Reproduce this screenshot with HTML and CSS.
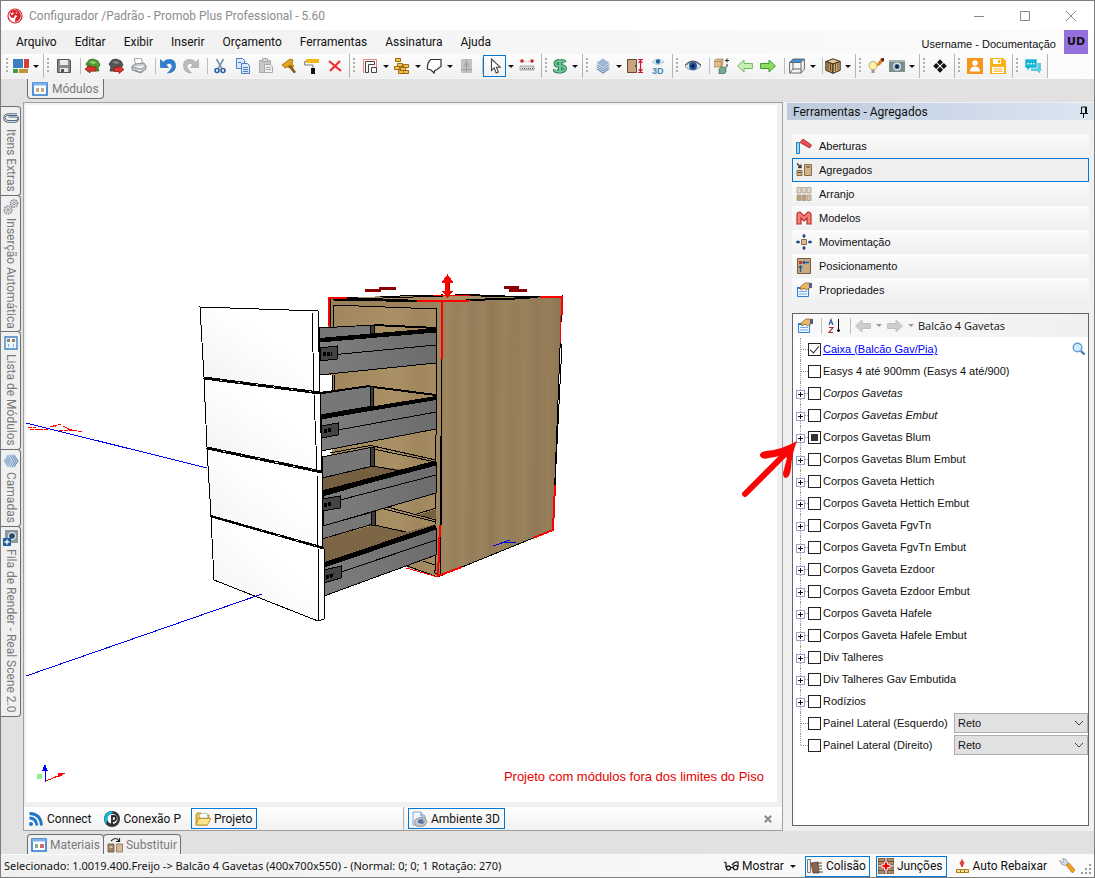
FILE: index.html
```html
<!DOCTYPE html>
<html lang="pt-BR">
<head>
<meta charset="utf-8">
<title>Configurador /Padrão - Promob Plus Professional - 5.60</title>
<link rel="stylesheet" href="styles.css">
</head>
<body>
<div class="window">
<header class="titlebar">
  <svg class="logo" viewBox="0 0 16 16"><circle cx="8" cy="8" r="7" fill="#fff" stroke="#d8202b" stroke-width="1.200"/><path d="M4 3Q8 .8 12 3.500q2.500 3 1.500 6-2 4-5.500 4.500l.5-4 2-2-2.500-1L7 10 4 9.500 2.500 7z" fill="#d8202b"/><path d="M4 5.200l2.500-1v2l-2 1zM8.600 4.200l2 .4-1.500 1.400z" fill="#fff"/></svg>
  <h1>Configurador /Padrão - Promob Plus Professional - 5.60</h1>
  <div class="winctl">
    <button aria-label="Minimizar"><svg viewBox="0 0 12 12"><path d="M1 6.500h10"/></svg></button>
    <button aria-label="Maximizar"><svg viewBox="0 0 12 12"><path d="M1.500 1.500h9v9h-9z"/></svg></button>
    <button aria-label="Fechar"><svg viewBox="0 0 12 12"><path d="M1 1l10 10M11 1L1 11"/></svg></button>
  </div>
</header>
<nav class="menubar">
  <button>Arquivo</button><button>Editar</button><button>Exibir</button><button>Inserir</button><button>Orçamento</button><button>Ferramentas</button><button>Assinatura</button><button>Ajuda</button>
  <span class="user">Username - Documentação</span><span class="avatar">UD</span>
</nav>
<div class="toolbar">
  <div class="grp"><i class="grip"></i>
    <button class="tb nar" aria-label="Painéis"><svg viewBox="0 0 16 16"><path fill="#3f7fbf" d="M0 1h10v9H0z"/><path fill="#cf4238" d="M11 1h5v9h-5z"/><path fill="#3e9c3e" d="M0 11h5v4H0z"/><path fill="#c39237" d="M6 11h9v4H6z"/></svg></button><button class="car" aria-label="Opções"></button>
  </div>
  <div class="grp"><i class="grip"></i>
    <button class="tb" aria-label="Salvar"><svg viewBox="0 0 16 16"><path fill="#888a88" stroke="#555" d="M1.500 1.500h12l1 1v12h-13z"/><path fill="#e8ece6" d="M4 2h8v5H4zM4 10h8v4H4z"/><path fill="#555" d="M5 11h3v3H5z"/></svg></button><i class="sep"></i>
    <button class="tb" aria-label="Importar"><svg viewBox="0 0 16 16"><path d="M1 6l3-4 4-1 5 2 2 4-2 3 1 3H2l1-4z" fill="#4f9a35" stroke="#2c6a1c" stroke-width=".8"/><path d="M4 4l4-1 4 2-4 1z" fill="#9bd070"/><path d="M0 11l5-4v2h6v4H5v2z" fill="#e0342c" stroke="#8d1510" stroke-width=".7"/></svg></button>
    <button class="tb" aria-label="Exportar"><svg viewBox="0 0 16 16"><path d="M1 6l3-4 4-1 5 2 2 4-2 3 1 3H2l1-4z" fill="#555" stroke="#333" stroke-width=".8"/><path d="M4 4l4-1 4 2-4 1z" fill="#888"/><path d="M16 11.500l-5-4v2H6v4h5v2z" fill="#e0342c" stroke="#8d1510" stroke-width=".7"/></svg></button>
    <button class="tb" aria-label="Imprimir"><svg viewBox="0 0 16 16"><path d="M3 1l7-1 2 6-7 1z" fill="#fff" stroke="#888" stroke-width=".8"/><path d="M1 8l3-2 9-1 2 3v3l-5 4-9-3z" fill="#c9ced6" stroke="#777" stroke-width=".8"/><path d="M1 9l9 2 5-3M4 12l5 2 3-2" stroke="#777" fill="#fff" stroke-width=".8"/></svg></button><i class="sep"></i>
    <button class="tb" aria-label="Desfazer"><svg viewBox="0 0 16 16"><path d="M.5 1.500v8h8L5.800 6.800Q9 4 11.300 6.200T10 12.500L7.500 15q8-.5 8-7T10 1.500 3.500 4.500z" fill="#2f7fd4" stroke="#1a5ca8" stroke-width=".6"/></svg></button>
    <button class="tb" aria-label="Refazer"><svg viewBox="0 0 16 16"><path d="M15.500 1.500v8h-8l2.700-2.700Q7 4 4.700 6.200T6 12.500L8.500 15Q.5 14.500.5 8T6 1.500t6.500 3z" fill="#bcbcbc" stroke="#999" stroke-width=".6"/></svg></button><i class="sep"></i>
    <button class="tb" aria-label="Recortar"><svg viewBox="0 0 16 16" fill="none"><path d="M4.500 1l5 9M11.500 1l-5 9" stroke="#7a93b0" stroke-width="1.600"/><circle cx="5" cy="12.500" r="2" stroke="#2a5ea8" stroke-width="1.600"/><circle cx="11" cy="12.500" r="2" stroke="#2a5ea8" stroke-width="1.600"/></svg></button>
    <button class="tb" aria-label="Copiar"><svg viewBox="0 0 16 16" fill="#dbe9fa" stroke="#4a7fc8"><path d="M1.500.5h6l2 2v8h-8z"/><path d="M6.500 5.500h6l2 2v8h-8z"/><path d="M8 9.500h5M8 11.500h5M8 13.500h5M3 4.500h3"/></svg></button>
    <button class="tb" aria-label="Colar"><svg viewBox="0 0 16 16" stroke="#a8a8a8"><path fill="#c8c8c8" d="M1.500 2.500h11v12h-11z"/><path fill="#ddd" d="M4.500.5h5v3h-5z"/><path fill="#eee" d="M6.500 6.500h6l2 2v6h-8z"/><path d="M8 9.500h5M8 11.500h5"/></svg></button>
    <button class="tb" aria-label="Martelo"><svg viewBox="0 0 16 16"><path d="M1 7l8-6 3 1-1 4 2 2-3 2-4-1-2 1z" fill="#e0a51c" stroke="#95690a" stroke-width=".8"/><path d="M7 8l3-1 5 7-2 1.500z" fill="#8a5a14"/></svg></button>
    <button class="tb" aria-label="Rolo"><svg viewBox="0 0 16 16"><path d="M2 1h13v4H2z" fill="#f3b61c"/><path d="M2 3.500H.7V7H9v4" stroke="#777" fill="none"/><path d="M7 10h4v6H7z" fill="#111"/></svg></button>
    <button class="tb" aria-label="Excluir"><svg viewBox="0 0 16 16"><path d="M2 3l12 10M13 3L3 13" stroke="#ee3030" stroke-width="2.200"/></svg></button>
  </div>
  <div class="grp"><i class="grip"></i>
    <button class="tb" aria-label="Paredes"><svg viewBox="0 0 16 16" fill="none"><path d="M1.500 15V1.500h13V9" stroke="#e88080"/><path d="M3.500 14.500V3.500h9v3H6.500v8zM9.500 14.500v-5h5v5z" stroke="#444"/></svg></button><button class="car" aria-label="Opções"></button>
    <button class="tb" aria-label="Tijolos"><svg viewBox="0 0 16 16" fill="#f7c34a" stroke="#9a6a10"><path d="M1.500.5h5v3h-5zM3.500 5.500h5v3h-5zM9.500 6.500h5v3h-5zM.5 8.500h5v3h-5zM6.500 9.500h5v3h-5zM4.500 12.500h5v3h-5zM9.500 12.500h5v3h-5z"/></svg></button><button class="car" aria-label="Opções"></button>
    <button class="tb" aria-label="Forma"><svg viewBox="0 0 16 16"><path d="M5 1.500h10v7l-4 3q-3 .5-3 3.500L5 12 1.500 11Q1 4 5 1.500z" fill="#fff" stroke="#333" stroke-width="1.200"/></svg></button><button class="car" aria-label="Opções"></button>
    <button class="tb" aria-label="Armário"><svg viewBox="0 0 16 16"><path fill="#c2c2c2" d="M3 1h11v14H3z"/><path stroke="#a0a0a0" d="M8.500 1v14M7 5v4M10 5v4M3 11.500h11"/></svg></button><i class="sep"></i>
    <button class="tb on" aria-label="Selecionar"><svg viewBox="0 0 16 16"><path d="M4.500 1v11.500l2.700-2.600 2 5 2.200-1-2-4.700h3.800z" fill="#fff" stroke="#444" stroke-width="1.100"/></svg></button><button class="car" aria-label="Opções"></button>
    <button class="tb" aria-label="Medir"><svg viewBox="0 0 16 16"><circle cx="3" cy="3" r="1.800" fill="#c22"/><circle cx="13" cy="3" r="1.800" fill="#c22"/><path d="M5 3.500h6" stroke="#aaa" stroke-dasharray="1"/><path d="M1 8h14v4H1z" fill="#d9dade" stroke="#888" stroke-width=".7"/><path d="M3 10.500h11" stroke="#555" stroke-dasharray="1 1"/></svg></button>
  </div>
  <div class="grp"><i class="grip"></i>
    <button class="tb nar" aria-label="Orçamento"><svg viewBox="0 0 16 16" fill="none"><path d="M13 4.500Q12 3 8 3 3.500 3 3.500 5.500T8 8t5 2.500T8 13.300 3 11.500M8 1v14.500" stroke="#2c7d55" stroke-width="4"/><path d="M13 4.500Q12 3 8 3 3.500 3 3.500 5.500T8 8t5 2.500T8 13.300 3 11.500M8 1v14" stroke="#6cc795" stroke-width="2"/></svg></button><button class="car" aria-label="Opções"></button>
  </div>
  <div class="grp"><i class="grip"></i>
    <button class="tb" aria-label="Camadas"><svg viewBox="0 0 16 16" stroke="#e6eef7" stroke-width=".8"><path d="M1 11l7-4 7 4-7 5z" fill="#5f7fa6"/><path d="M1 9l7-4 7 4-7 5z" fill="#6f8fb6"/><path d="M1 7l7-4 7 4-7 5z" fill="#7f9dc2"/><path d="M1 4.800L8 .3l7 4.500-7 5z" fill="#9db8d6"/></svg></button><button class="car" aria-label="Opções"></button>
    <button class="tb" aria-label="Cotas"><svg viewBox="0 0 16 16"><path d="M.5 1.500h9v13h-9z" fill="#c9a37c" stroke="#6b4b2e"/><path d="M8.500 7v2" stroke="#553"/><path d="M11 1.500h5M11 14.500h5M13.500 2v12M11.500 5l2-2.500 2 2.500M11.500 11l2 2.500 2-2.500" stroke="#cf1040" stroke-width="1.200" fill="none"/></svg></button>
    <button class="tb" aria-label="Visão 3D"><svg viewBox="0 0 16 16"><path d="M2 4q6-6 12 0-6 5-12 0z" fill="#dceaf6" stroke="#9fc0dc" stroke-width=".7"/><circle cx="8" cy="3.500" r="2.200" fill="#27608f"/><text class="i3d" x="2" y="15.500">3D</text></svg></button>
  </div>
  <div class="grp"><i class="grip"></i>
    <button class="tb" aria-label="Visualizar"><svg viewBox="0 0 16 16"><path d="M0 8.500Q8 0 16 8q-8 8-16 .5z" fill="#e8eef6" stroke="#6a7d96" stroke-width=".8"/><circle cx="8" cy="8" r="4" fill="#2456a0"/><circle cx="8" cy="8" r="1.800" fill="#0b1a38"/><path d="M0 7Q8-1 16 7" stroke="#333" fill="none"/></svg></button><i class="sep"></i>
    <button class="tb" aria-label="Substituir"><svg viewBox="0 0 16 16"><path d="M0 3.500L2 1h7v6L7 9H0z" fill="#e2bd8a" stroke="#9a7546" stroke-width=".6"/><path d="M0 3.500h7V9M7 3.500L9 1" fill="none" stroke="#9a7546" stroke-width=".6"/><path d="M5 11l2-2h5v5l-2 2H5z" fill="#71a98c" stroke="#33664c" stroke-width=".6"/><path d="M11 2.500h4M13 .5v4M13 6v3" stroke="#222" fill="none"/></svg></button>
    <button class="tb" aria-label="Anterior"><svg viewBox="0 0 16 16"><path d="M.6 8L7 2v3.500h8.400v5H7V14z" fill="#c9efb4" stroke="#6fb960"/></svg></button>
    <button class="tb" aria-label="Próximo"><svg viewBox="0 0 16 16"><path d="M15.400 8L9 2v3.500H.6v5H9V14z" fill="#8edb62" stroke="#3c9a2c"/></svg></button><i class="sep"></i>
    <button class="tb" aria-label="Perspectiva"><svg viewBox="0 0 16 16"><path d="M.6 4.500L4 1h11.400l-3.400 3.500z" fill="#3f8fe0"/><path d="M.6 4.500V15H12l3.400-4V1H4L.6 4.500H12V15M12 4.500L15.400 1M4 4.500V11h8M4 11L.6 15" stroke="#666" fill="none"/></svg></button><button class="car" aria-label="Opções"></button><i class="sep"></i>
    <button class="tb nar" aria-label="Material"><svg viewBox="0 0 16 16" stroke="#3b2a18"><path d="M.8 3.500L8 .8l7.200 2.700L8 6z" fill="#e6c79a"/><path d="M.8 3.500L8 6v9.300l-7.200-3z" fill="#bb9462"/><path d="M15.200 3.500L8 6v9.300l7.200-3z" fill="#d4ad7a"/><path d="M3 5v7M5.500 6v7M10.500 6v7M13 5v7" stroke-width=".7"/></svg></button><button class="car" aria-label="Opções"></button>
  </div>
  <div class="grp"><i class="grip"></i>
    <button class="tb" aria-label="Iluminação"><svg viewBox="0 0 16 16"><path d="M1 7.500q0-4 4-4t4 4q0 2-2 4H3q-2-2-2-4z" fill="#fdf2a6" stroke="#b3a05a" stroke-width=".8"/><path d="M3.500 12h3v3h-3z" fill="#999"/><path d="M9 6l4-5.500L16 2l-4 5-3 1z" fill="#e07e1a"/><path d="M12.500.5L16 0v3l-1.500 1z" fill="#4a2410"/></svg></button>
    <button class="tb nar" aria-label="Câmera"><svg viewBox="0 0 16 16"><path d="M0 2h16v12H0z" fill="#7d8c8c"/><path d="M0 2h16v2H0z" fill="#a9b5b5"/><circle cx="8" cy="8.500" r="4" fill="#dfe6ea"/><circle cx="8" cy="8.500" r="2.600" fill="#2a5b86"/><circle cx="8" cy="8.500" r="1.200" fill="#0a1a2a"/></svg></button><button class="car" aria-label="Opções"></button>
  </div>
  <div class="grp"><i class="grip"></i>
    <button class="tb" aria-label="Módulos"><svg viewBox="0 0 16 16"><path d="M8 1.200l3 3-3 3-3-3zM4.200 5l3 3-3 3-3-3zM11.800 5l3 3-3 3-3-3zM8 8.800l3 3-3 3-3-3z" fill="#111"/></svg></button>
  </div>
  <div class="grp"><i class="grip"></i>
    <button class="tb" aria-label="Perfil"><svg viewBox="0 0 16 16"><path fill="#f7941d" d="M0 0h16v16H0z"/><circle cx="8" cy="5" r="2.800" fill="#fff"/><path d="M3 13.500q0-5 5-5t5 5z" fill="#fff"/></svg></button>
    <button class="tb" aria-label="Salvar na nuvem"><svg viewBox="0 0 16 16"><path fill="#fbb11a" d="M0 0h13l3 3v13H0z"/><path d="M3 1h8v5H3zM2 9h12v6H2z" fill="#fff"/><path d="M8 2h2v3H8zM3.500 10.500h9v1h-9zM3.500 12.700h9v1h-9z" fill="#fbb11a"/></svg></button>
  </div>
  <div class="grp"><i class="grip"></i>
    <button class="tb" aria-label="Mensagens"><svg viewBox="0 0 16 16"><path d="M6 5h10v8h-1v2.500L12 13H6z" fill="#5ccbe0"/><path d="M0 1h12v9H5l-3 3v-3H0z" fill="#12b5d6" stroke="#fff" stroke-width=".6"/><path d="M2.500 5h1.600v1.600H2.500zM5.300 5h1.600v1.600H5.300zM8.100 5h1.600v1.600H8.100z" fill="#fff"/></svg></button>
  </div>
</div>

<div class="tabrow top"><button class="tab"><svg viewBox="0 0 16 16"><path d="M1 2h14v12H1z" fill="#fff" stroke="#2a78cf" stroke-width="1.600"/><path d="M1 2h14v2.500H1z" fill="#7db2e8"/><path d="M4 7h3v4H4zM9 7h3v4H9z" fill="#c4ad86"/></svg>Módulos</button></div>

<div class="work">
  <aside class="side">
    <button><svg viewBox="0 0 16 16" fill="none"><path d="M14 5.500H5Q2 5.500 2 8t3 2.500h8q2 0 2-1.700T13 7H5.500M14 5.500Q15.500 6 15.500 9q-.5 3.300-3 3.300H5Q.7 12 .7 8T5 3.800h9" stroke="#3d5875" stroke-width=".9"/></svg><span>Itens Extras</span></button>
    <button><svg viewBox="0 0 16 16" fill="none" stroke="#8b8b96"><circle cx="11" cy="4.500" r="3.500" stroke-width="1.800" stroke-dasharray="1.400 .8"/><circle cx="11" cy="4.500" r="1.300"/><circle cx="5" cy="11" r="3.700" stroke-width="1.800" stroke-dasharray="1.400 .8"/><circle cx="5" cy="11" r="1.300"/></svg><span>Inserção Automática</span></button>
    <button><svg viewBox="0 0 16 16"><path d="M2 2h12v12H2z" fill="#eef5fd" stroke="#3d7fc4" stroke-width="1.300"/><path d="M4 4h3v3H4zM9 4h3v3H9z" fill="#8a8468"/><path d="M5.500 9v3M10.500 9v3" stroke="#7daee0"/></svg><span>Lista de Módulos</span></button>
    <button><svg viewBox="0 0 16 16" stroke="#e6eef7" stroke-width=".8"><path d="M11 1l5 7-5 7-5-7z" fill="#5f7fa6"/><path d="M9 1l5 7-5 7-5-7z" fill="#6f8fb6"/><path d="M7 1l5 7-5 7-5-7z" fill="#7f9dc2"/><path d="M5 1l4.500 7L5 15 .3 8z" fill="#9db8d6"/></svg><span>Camadas</span></button>
    <button><svg viewBox="0 0 16 16"><path d="M2 0h13v13H2z" fill="#8b9b9b"/><circle cx="9" cy="6" r="4" fill="#dfe6ea"/><circle cx="9" cy="6" r="2.800" fill="#24496c"/><path d="M0 8h8v8H0z" fill="#1f5f9c"/><path d="M1.500 12h5M4 9.500v5" stroke="#fff" stroke-width="1.300"/></svg><span>Fila de Render - Real Scene 2.0</span></button>
  </aside>

  <main class="center">
    <div class="canvas">
    <svg class="scene" viewBox="26 105 751 696" role="img" aria-label="Balcão 4 Gavetas">
      <defs>
        <linearGradient id="wood" x1="0" x2="1" y1="0" y2="0.02"><stop offset="0" stop-color="#957e59"/><stop offset=".06" stop-color="#9e8660"/><stop offset=".13" stop-color="#967f59"/><stop offset=".2" stop-color="#9c8560"/><stop offset=".27" stop-color="#957d59"/><stop offset=".36" stop-color="#9b835d"/><stop offset=".43" stop-color="#927a56"/><stop offset=".52" stop-color="#9a825c"/><stop offset=".62" stop-color="#957d59"/><stop offset=".7" stop-color="#9a825c"/><stop offset=".8" stop-color="#917957"/><stop offset=".9" stop-color="#977f5a"/><stop offset="1" stop-color="#8d7553"/></linearGradient>
        <linearGradient id="inner" x1="0" x2="1" y1="0" y2="0"><stop offset="0" stop-color="#a0855c"/><stop offset=".3" stop-color="#aa9065"/><stop offset=".4" stop-color="#a1875e"/><stop offset=".55" stop-color="#ab9166"/><stop offset=".7" stop-color="#a48a60"/><stop offset=".85" stop-color="#a98f64"/><stop offset="1" stop-color="#9f855c"/></linearGradient>
        <linearGradient id="metal" x1="0" x2="1"><stop offset="0" stop-color="#7e7e7e"/><stop offset="1" stop-color="#6c6c6c"/></linearGradient>
        <linearGradient id="front" x1="1" x2="0" y1="0" y2="1"><stop offset=".4" stop-color="#fff"/><stop offset="1" stop-color="#f1f1f1"/></linearGradient>
      </defs>
      <g shape-rendering="crispEdges" fill="none" stroke="#000">
        <path d="M26 423L207 468" stroke="#0000f0"/>
        <path d="M28 427h8m3 2h10m4-3l8-2m2 2l8 4m-12 0h18m-47-1h12m8-3h6m12 3l14 3" stroke="#f00" stroke-dasharray="4 1"/>
        <!-- carcass -->
        <path d="M328 298L390 296 447 295 562 296 553 530 439 577 406 567 322 540V453h10V375h-3z" fill="url(#inner)" stroke="none"/>
        <path d="M442 301L562 296 553 530 440 576z" fill="url(#wood)"/>
        <path d="M437 301h5l-2 275-5-3z" fill="#a0875f"/>
        <path d="M331 298l106 4v7l-106-4z" fill="#9b8259" stroke="none"/>
        <path d="M333 300l104 2M333 305l104 4M333 305v22M330 298v77M334 375v16M332 375v16M380 297l20-1 42-1 120 2M333 300l50-2 60-2"/>
        <path d="M345 298l75 3M470 300l60-2M455 295l50 1" stroke-width="2"/>
        <path d="M320 375h10v17h-10zM322 452h9v5h-9z" fill="#fff" stroke="none"/>
        <!-- drawer 1 -->
        <path d="M319 328l55-3v9l-55 5z" fill="#777"/>
        <path d="M370 325h4v9h-4z" fill="#3c3c3c"/>
        <path d="M374 325l62 3" stroke-width="2"/>
        <path d="M319 342l117-10v31l-117 12z" fill="url(#metal)"/>
        <path d="M319 340l117-10" stroke-width="4"/><path d="M320 356l116-11"/>
        <path d="M320 348l17-2v13l-17 2z" fill="#444"/><path d="M323 354h9" stroke-width="4" stroke-dasharray="3 1"/>
        <!-- drawer 2 -->
        <path d="M320 394l50-8 3 20-53 9z" fill="#777"/>
        <path d="M370 386h3v20h-3z" fill="#3c3c3c"/>
        <path d="M373 387l63 8M320 393l50-7" stroke-width="2"/>
        <path d="M321 419l115-20v30l-115 22z" fill="url(#metal)"/>
        <path d="M321 417l115-19" stroke-width="4"/><path d="M338 430l98-18"/>
        <path d="M321 426l17-3v12l-17 3z" fill="#444"/><path d="M324 431l8-1" stroke-width="4" stroke-dasharray="3 1"/>
        <!-- drawer 3 -->
        <path d="M322 478l51-12 34 4 29-6v8l-114 25z" fill="#755f40" stroke="none"/>
        <path d="M373 466l27 5"/>
        <path d="M322 457l51-10v19l-51 12z" fill="#777"/>
        <path d="M370 447h4v19h-4z" fill="#3c3c3c"/>
        <path d="M373 446l63 14M373 449l63 13M330 453l43-8"/>
        <path d="M322 526l51-14v12l-51 15z" fill="#777"/>
        <path d="M323 496l113-33v30l-113 33z" fill="url(#metal)"/>
        <path d="M322 493l114-30" stroke-width="5"/><path d="M340 500l96-25"/>
        <path d="M322 499l18-3v12l-18 3z" fill="#444"/><path d="M324 505l8-1" stroke-width="4" stroke-dasharray="3 1"/>
        <!-- drawer 4 -->
        <path d="M323 539l51-14 32 7 30-8v5l-113 38z" fill="#7d6645" stroke="none"/>
        <path d="M374 525l32 7M387 507l49 13M384 509l52 13M417 514l19-6"/>
        <path d="M418 515l18-6v10z" fill="#75603f" stroke="none"/>
        <path d="M371 511h4v14h-4z" fill="#3c3c3c"/>
        <path d="M324 565l112-36v26l-112 41z" fill="url(#metal)"/>
        <path d="M324 565l112-38" stroke-width="5"/><path d="M341 572l95-32"/>
        <path d="M324 570l17-4v12l-17 5z" fill="#444"/><path d="M326 577l8-2" stroke-width="4" stroke-dasharray="3 1"/>
        <path d="M407 566l28 10M423 561l12 4"/>
        <!-- fronts -->
        <path d="M200 307l118 4 2 81-116-15z" fill="url(#front)"/>
        <path d="M204 379l116 15 2 77-115-24z" fill="url(#front)"/>
        <path d="M207 449l115 24 1 74-112-31z" fill="url(#front)"/>
        <path d="M211 517l113 32v70l-6 2-104-41z" fill="url(#front)"/>
        <path d="M312 312l2 79M314 395l3 75M317 474l1 73M318 549v71"/>
        <path d="M204 378l116 15M207 448l115 24M211 516l113 32" stroke-width="2" stroke-dasharray="16 2"/>
        <path d="M26 676L262 594" stroke="#0000f0"/>
        <path d="M493 546l17-6M501 542l15 1" stroke="#0000f0"/>
        <!-- selection outline -->
        <g stroke="#f00" stroke-width="2"><path d="M329 326v-28h18M417 301h52M540 297h22v18M442 301v58M555 485l-2 45-20 8M440 525l-2 51 24-9"/><path d="M433 295h37M561 316l-1 28M406 568l32 9" stroke-width="1"/></g>
        <path d="M441 360v165M562 344l-7 141"/>
        <path d="M365 289h16v3h-16zM379 287h17v3h-17zM504 286h15v3h-15zM509 289h18v3h-18z" fill="#8b0000" stroke="none"/>
        <path d="M447.500 275l5 7h-3v9h3l-5 6-5-6h3v-9h-3z" fill="#f00" stroke="#f00"/><path d="M449 283v7" stroke="#900"/>
        <path d="M37 774h5v5h-5z" fill="#90ee90" stroke="none"/><path d="M45 782v-12" stroke="#00f"/><path d="M45 764l3 7h-6z" fill="#00f" stroke="none"/><path d="M46 781l12-5" stroke="#f00"/><path d="M65 773l-7 1v3z" fill="#f00" stroke="#f00"/>
      </g>
    </svg>
    <p class="warn">Projeto com módulos fora dos limites do Piso</p>
    </div>
    <div class="viewtabs">
      <div class="seg a">
        <button><svg viewBox="0 0 16 16" fill="none" stroke="#1d78c8"><circle cx="3" cy="13" r="2" fill="#1d78c8" stroke="none"/><path d="M1.500 7Q8 7 9 14.500M1.500 2.500Q13 3 13.500 14.500" stroke-width="2.800"/></svg>Connect</button>
        <button><svg viewBox="0 0 16 16"><circle cx="8" cy="8" r="8" fill="#2f3438"/><path d="M8 0a8 8 0 0 0-6 13L4 8Q5 3 9 2z" fill="#14b4d8"/><circle cx="8.500" cy="8" r="5" fill="#fff"/><path d="M8 13.500V5h1.500Q12 5 12 7.500T9 10" fill="none" stroke="#222" stroke-width="1.800"/></svg>Conexão P</button>
        <button class="on"><svg viewBox="0 0 16 16"><path d="M1 4l1-2h4l1 2h7v3L12 14H1z" fill="#e9c34e" stroke="#a8801c" stroke-width=".8"/><path d="M4 3l8-1 1 5H5z" fill="#fff" stroke="#999" stroke-width=".6"/><path d="M3.500 7.500H16L12.500 14H1.200z" fill="#fbe48c" stroke="#b48a20" stroke-width=".8"/></svg>Projeto</button>
      </div>
      <div class="seg b">
        <button class="on"><svg viewBox="0 0 16 16"><path d="M1 1h8l4 4v9H1z" fill="#f2f7fd" stroke="#6a93c4" stroke-width=".8"/><path d="M9 1v4h4" fill="#d0e0f2" stroke="#4a86c8" stroke-width=".8"/><path d="M3 9q4-4 10-2l2 4-3 4-7 .5L2.500 12z" fill="#c8cbd0" stroke="#777" stroke-width=".7"/><path d="M6 9l4-1 3 2-2 3-5-1z" fill="#4b78b0"/><path d="M10 8l3 2-1 2z" fill="#d8a14a"/></svg>Ambiente 3D</button>
        <button class="close" aria-label="Fechar vista"><svg viewBox="0 0 8 8"><path d="M.8.8l6.400 6.400M7.200.8L.8 7.200"/></svg></button>
      </div>
    </div>
  </main>

  <section class="panel">
    <h2>Ferramentas - Agregados<svg viewBox="0 0 10 12"><path d="M2.500 1h5v6M2.500 1v6M6.500 1v6M1 7.500h8M4.500 8v4" stroke="#111" fill="none"/></svg></h2>
    <div class="cats">
      <button><svg viewBox="0 0 16 16"><path d="M.5 4.500h3v11h-3z" fill="#a8d8f2" stroke="#1b7fc0"/><path d="M4 4.500L7 1l8.500 6-2 3z" fill="#e84a50" stroke="#a8242c" stroke-width=".8"/></svg>Aberturas</button>
      <button class="on"><svg viewBox="0 0 16 16"><path d="M1 1.500l4 4m0-3v3H2" stroke="#333" stroke-width="1.300" fill="none"/><path d="M1 8.500h5v5H1zM8.500 2.500h7v11h-7z" fill="#cfb48e" stroke="#8a6c48"/><path d="M2 10.500h3M10 5h4" stroke="#5a4226"/></svg>Agregados</button>
      <button><svg viewBox="0 0 16 16" stroke="#a99a86" stroke-width=".8"><path d="M1 1.500h4v5.500H1zM6 1.500h4v5.500H6zM11 1.500h4v5.500h-4z" fill="#e4dace"/><path d="M1 9h4v5.500H1zM6 9h4v5.500H6z" fill="#bc9e78"/><path d="M11 9h4v5.500h-4z" fill="#d0bfa6"/></svg>Arranjo</button>
      <button><svg viewBox="0 0 16 16"><path d="M1 14V5q0-3 3-3l4 4 4-4q3 0 3 3v9h-4V8l-3 3-3-3v6z" fill="#f08078" stroke="#c0302c" stroke-width="1.200"/></svg>Modelos</button>
      <button><svg viewBox="0 0 16 16"><path d="M5.500 5.500h5v5h-5z" fill="#d8bd92" stroke="#8a6c48"/><path d="M8 0v4M8 12v4M0 8h4M12 8h4M6.500 2h3M6.500 14h3M2 6.500v3M14 6.500v3" stroke="#123f78" stroke-width="1.300" fill="none"/></svg>Movimentação</button>
      <button><svg viewBox="0 0 16 16"><path d="M1.500.5h13v15h-13z" fill="#c8a982" stroke="#7a5c3a"/><path d="M3 3h3v3H3z" fill="#d03030"/><path d="M7 4.500h6M8.500 3L7 4.500 8.500 6M4.500 8v6M3 9.500L4.500 8 6 9.500" stroke="#155a90" stroke-width="1.300" fill="none"/></svg>Posicionamento</button>
      <button><svg viewBox="0 0 16 16"><path d="M1.500 5.500h11v9h-11z" fill="#f2f8ff" stroke="#2a7fd4"/><path d="M1 5h12v2H1z" fill="#2a7fd4"/><path d="M3 9.500h8M3 12h8" stroke="#6aa7e4"/><path d="M4 5l5-4h5v5l-4 2-2-2-3 2z" fill="#e8b866" stroke="#8a5f1e" stroke-width=".7"/><path d="M13 1h3v5h-3z" fill="#555a90"/></svg>Propriedades</button>
    </div>
    <div class="treebox">
      <div class="treebar">
        <button class="tb" aria-label="Propriedades"><svg viewBox="0 0 16 16"><path d="M1.500 5.500h11v9h-11z" fill="#f2f8ff" stroke="#2a7fd4"/><path d="M1 5h12v2H1z" fill="#2a7fd4"/><path d="M3 9.500h8M3 12h8" stroke="#6aa7e4"/><path d="M4 5l5-4h5v5l-4 2-2-2-3 2z" fill="#e8b866" stroke="#8a5f1e" stroke-width=".7"/><path d="M13 1h3v5h-3z" fill="#555a90"/></svg></button><i class="sep"></i>
        <button class="tb" aria-label="Ordenar"><svg viewBox="0 0 16 16" fill="none"><path d="M3 7l2-5.500L7 7M3.800 5h2.400" stroke="#3b62a8" stroke-width="1.200"/><path d="M3 9.500h4l-4 5h4" stroke="#a03030" stroke-width="1.200"/><path d="M12.500 1v13M11.200 12l1.300 2 1.300-2z" stroke="#111" fill="#111"/></svg></button><i class="sep"></i>
        <button class="tb" aria-label="Voltar"><svg viewBox="0 0 16 16"><path d="M.6 8L7 2v3.500h8.400v5H7V14z" fill="#cdcdcd" stroke="#c0c0c0"/></svg></button><button class="car dis" aria-label="Histórico"></button>
        <button class="tb" aria-label="Avançar"><svg viewBox="0 0 16 16"><path d="M15.400 8L9 2v3.500H.6v5H9V14z" fill="#cdcdcd" stroke="#c0c0c0"/></svg></button><button class="car dis" aria-label="Histórico"></button>
        <span>Balcão 4 Gavetas</span>
      </div>
      <ul class="tree">
        <li><input type="checkbox" id="c1" aria-labelledby="l1" checked><a id="l1" href="#caixa">Caixa (Balcão Gav/Pia)</a><button class="find" aria-label="Localizar"><svg viewBox="0 0 14 14"><circle cx="5.500" cy="5.500" r="4.300" fill="#d5eafa" stroke="#5b9fd8" stroke-width="1.400"/><path d="M9 9l3.500 3.500" stroke="#4a78b0" stroke-width="2.400"/></svg></button></li>
        <li><input type="checkbox" id="c2"><label for="c2">Easys 4 até 900mm (Easys 4 até/900)</label></li>
        <li class="ex it"><button aria-label="Expandir"></button><input type="checkbox" id="c3"><label for="c3">Corpos Gavetas</label></li>
        <li class="ex it"><button aria-label="Expandir"></button><input type="checkbox" id="c4"><label for="c4">Corpos Gavetas Embut</label></li>
        <li class="ex"><button aria-label="Expandir"></button><input type="checkbox" class="mixed" id="c5"><label for="c5">Corpos Gavetas Blum</label>
          <svg class="pointer" viewBox="0 0 60 64"><path d="M5 55L46 14" stroke="#fa0505" stroke-width="6" stroke-linecap="round"/><path d="M57 2Q41 11 26 12q-7 1-6 5 2 4 9 2l11-2 4-1 3 3-4 15q0 5 3 5 4-1 5-10Q52 14 57 2z" fill="#fa0505"/></svg></li>
        <li class="ex"><button aria-label="Expandir"></button><input type="checkbox" id="c6"><label for="c6">Corpos Gavetas Blum Embut</label></li>
        <li class="ex"><button aria-label="Expandir"></button><input type="checkbox" id="c7"><label for="c7">Corpos Gaveta Hettich</label></li>
        <li class="ex"><button aria-label="Expandir"></button><input type="checkbox" id="c8"><label for="c8">Corpos Gaveta Hettich Embut</label></li>
        <li class="ex"><button aria-label="Expandir"></button><input type="checkbox" id="c9"><label for="c9">Corpos Gaveta FgvTn</label></li>
        <li class="ex"><button aria-label="Expandir"></button><input type="checkbox" id="c10"><label for="c10">Corpos Gaveta FgvTn Embut</label></li>
        <li class="ex"><button aria-label="Expandir"></button><input type="checkbox" id="c11"><label for="c11">Corpos Gaveta Ezdoor</label></li>
        <li class="ex"><button aria-label="Expandir"></button><input type="checkbox" id="c12"><label for="c12">Corpos Gaveta Ezdoor Embut</label></li>
        <li class="ex"><button aria-label="Expandir"></button><input type="checkbox" id="c13"><label for="c13">Corpos Gaveta Hafele</label></li>
        <li class="ex"><button aria-label="Expandir"></button><input type="checkbox" id="c14"><label for="c14">Corpos Gaveta Hafele Embut</label></li>
        <li class="ex"><button aria-label="Expandir"></button><input type="checkbox" id="c15"><label for="c15">Div Talheres</label></li>
        <li class="ex"><button aria-label="Expandir"></button><input type="checkbox" id="c16"><label for="c16">Div Talheres Gav Embutida</label></li>
        <li class="ex"><button aria-label="Expandir"></button><input type="checkbox" id="c17"><label for="c17">Rodízios</label></li>
        <li><input type="checkbox" id="c18"><label for="c18">Painel Lateral (Esquerdo)</label><span class="sel"><select aria-label="Painel Lateral (Esquerdo)"><option>Reto</option></select><svg viewBox="0 0 10 6"><path d="M1 1l4 4 4-4" fill="none" stroke="#444"/></svg></span></li>
        <li class="last"><input type="checkbox" id="c19"><label for="c19">Painel Lateral (Direito)</label><span class="sel"><select aria-label="Painel Lateral (Direito)"><option>Reto</option></select><svg viewBox="0 0 10 6"><path d="M1 1l4 4 4-4" fill="none" stroke="#444"/></svg></span></li>
      </ul>
    </div>
  </section>
</div>

<div class="tabrow bottom">
  <button class="tab"><svg viewBox="0 0 16 16"><path d="M1 2h14v12H1z" fill="#fff" stroke="#2a78cf" stroke-width="1.600"/><path d="M1 2h14v2.500H1z" fill="#7db2e8"/><path d="M4 7h3v4H4z" fill="#7fae8e"/><path d="M9 7h4v4H9z" fill="#d46a5e"/></svg>Materiais</button>
  <button class="tab"><svg viewBox="0 0 16 16"><path d="M1 7h6v8H1z" fill="#a08462" stroke="#6d553a" stroke-width=".8"/><path d="M9.500 7h6v8h-6z" fill="#d3bb9b" stroke="#8a6c48" stroke-width=".8"/><path d="M2.500 10h3" stroke="#fff"/><path d="M4 4q5-5 8 0m.5-3v3.500H9" stroke="#222" stroke-width="1.200" fill="none"/></svg>Substituir</button>
</div>

<footer class="status">
  <p>Selecionado: 1.0019.400.Freijo -&gt; Balcão 4 Gavetas (400x700x550) - (Normal: 0; 0; 1 Rotação: 270)</p>
  <button><svg viewBox="0 0 16 16" fill="none" stroke="#222" stroke-width="1.300"><path d="M1 4l2 1v5M9 7q3-4 6-3v5"/><circle cx="5.500" cy="10" r="2"/><circle cx="12.500" cy="9.500" r="2.200"/><path d="M7.500 9.500h3"/></svg>Mostrar<i class="arr"></i></button>
  <button class="on"><svg viewBox="0 0 16 16"><path d="M.5 1.500h3v13h-3z" fill="#eee" stroke="#777"/><path d="M4 5l7-1 1 11H6z" fill="#8a6450" stroke="#4a3326" stroke-width=".7"/><path d="M10 5h5M12 8h3M12 11h3M12 14h4" stroke="#5a4030"/></svg>Colisão</button>
  <button class="on"><svg viewBox="0 0 16 16"><path d="M0 0h7v7H0zM9 0h7v7H9zM0 9h7v7H0zM9 9h7v7H9z" fill="#b08a6c"/><path d="M0 3.500h7M9 3.500h7M0 12.500h7M9 12.500h7M0 0h7v7H0zM9 0h7v7H9zM0 9h7v7H0zM9 9h7v7H9z" stroke="#5f4230" stroke-width=".8" fill="none"/><path d="M6.500 4h3v2.500H12v3H9.500V12h-3V9.500H4v-3h2.500z" fill="#f00" stroke="#fff" stroke-width=".8"/></svg>Junções</button>
  <button class="auto"><svg viewBox="0 0 16 16"><path d="M8 1v8M6 4.500L8 9l2-4.500-2-2z" stroke="#c22" fill="#e55" stroke-width=".8"/><path d="M2.500 11.500h12v3h-12zM6.500 11.500v3M10.500 11.500v3" fill="#f7df9a" stroke="#b07c18"/></svg>Auto Rebaixar</button>
  <button aria-label="Configurar" class="wr"><svg viewBox="0 0 16 16"><path d="M7 7l3-2 6 7-2.500 3z" fill="#f2a01c" stroke="#b56a08" stroke-width=".7"/><path d="M1 2l2 2.500L5 3 3.500.5Q7 0 8 3l1 2-2.500 2.500Q1 7 1 2z" fill="#d4dbe4" stroke="#8a95a5" stroke-width=".8"/></svg></button>
  <svg class="resize" viewBox="0 0 12 12"><path d="M9 0h2v2H9zM9 4h2v2H9zM5 4h2v2H5zM9 8h2v2H9zM5 8h2v2H5zM1 8h2v2H1z" fill="#999"/></svg>
</footer>
</div>
</body>
</html>
```
FILE: styles.css
```css
* { box-sizing: border-box; }
body { margin: 0; font: 12px/16px Roboto, "Open Sans", sans-serif; color: #111; }
button { font: inherit; color: inherit; background: none; border: 0; padding: 0; margin: 0; display: flex; align-items: center; justify-content: center; }
svg { display: block; flex: none; width: 16px; height: 16px; }
h1, h2, p, ul { margin: 0; padding: 0; font-size: 12px; font-weight: 400; }
.window { display: flex; flex-direction: column; min-height: 100vh; border: 1px solid #7d7d7d; background: #e1e1e1; }

.titlebar { display: flex; align-items: center; height: 29px; background: #fff; padding-left: 6px; }
.titlebar h1 { flex: 1; margin-left: 6px; color: #8c8c8c; }
.winctl { display: flex; }
.winctl button { width: 46px; height: 28px; }
.winctl svg { width: 12px; height: 12px; fill: none; stroke: #888; }

.menubar { display: flex; align-items: center; height: 24px; padding: 0 6px 0 15px; background: linear-gradient(90deg, #f0f0f0, #fcfcfc); gap: 18px; }
.user { margin-left: auto; font: 11px/16px "Liberation Sans", sans-serif; padding-top: 3px; }
.avatar { width: 24px; height: 24px; margin-left: -10px; background: #9370db; font: bold 11px/23px "DejaVu Sans", sans-serif; text-align: center; }

.toolbar { display: flex; height: 25px; padding-left: 2px; background: linear-gradient(90deg, #f3f3f3, #fcfcfc); }
.grp { display: flex; align-items: center; height: 24px; padding-right: 3px; border-right: 1px solid #b4b4b4; background: linear-gradient(#fdfdfd, #f1f1f1); }
.grip { width: 8px; height: 16px; background: repeating-linear-gradient(#b0b0b0 0 2px, transparent 2px 4px) 3px 0 / 2px 16px no-repeat; }
.tb { width: 23px; height: 22px; }
.tb.nar { width: 20px; }
.tb.on { border: 1px solid #0078d7; }
.sep { width: 6px; height: 16px; border-right: 1px solid #bdbdbd; }
.car { width: 9px; height: 22px; }
.car::before, .arr { content: ""; border: 3px solid transparent; border-top-color: #111; border-bottom: 0; }
.car.dis::before { border-top-color: #999; }
.i3d { font: bold 9px "Liberation Sans", sans-serif; fill: #3d85b8; }

.tabrow { display: flex; height: 23px; padding-left: 26px; }
.tab { height: 20px; padding: 0 4px; gap: 4px; border: 1px solid #6e6e6e; background: #f0f0f0; color: #7a7a7a; }
.top .tab { border-top: 0; border-radius: 0 0 4px 4px; }
.bottom .tab { padding: 0 3px; gap: 3px; border-bottom: 0; border-radius: 4px 4px 0 0; }
.bottom { align-items: flex-end; }
.bottom .tab + .tab { margin-left: -1px; }

.work { display: flex; flex: 1; }
.side { width: 22px; flex: none; padding-top: 4px; display: flex; flex-direction: column; align-items: flex-start; }
.side button { flex-direction: column; justify-content: flex-start; width: 20px; padding: 3px 0; gap: 3px; border: 1px solid #6e6e6e; border-left: 0; border-radius: 0 4px 4px 0; background: #f0f0f0; color: #7a7a7a; line-height: 18px; }
.side button + button { margin-top: -1px; }
.side span { writing-mode: vertical-rl; white-space: nowrap; }

.center { flex: 1; min-width: 0; display: flex; flex-direction: column; border: 1px solid #a0a0a0; background: #f0f0f0; }
.canvas { position: relative; flex: 1; margin: 2px 5px 5px 2px; background: #fff; overflow: hidden; }
.scene { width: 751px; height: 696px; }
.warn { position: absolute; right: 13px; bottom: 16px; font: 13px/18px "Liberation Sans", sans-serif; color: #e80000; }
.viewtabs { display: flex; height: 23px; }
.seg { display: flex; align-items: center; background: linear-gradient(#fff, #f1f1f1); }
.seg button { height: 21px; padding: 0 4px 0 3px; gap: 3px; }
.on { border: 1px solid #0078d7; }
.seg.a { width: 380px; padding-left: 1px; gap: 6px; border-right: 1px solid #b4b4b4; }
.seg.b { flex: 1; padding: 0 6px 0 3px; margin-left: 1px; justify-content: space-between; }
.close svg { width: 8px; height: 8px; stroke: #8c8c8c; stroke-width: 2; }

.panel { width: 311px; flex: none; display: flex; flex-direction: column; padding: 1px 0 5px 4px; background: #f0f0f0; }
.panel h2 { display: flex; align-items: center; justify-content: space-between; height: 17px; padding: 0 5px 0 6px; background: linear-gradient(90deg, #bccadb, #dbe6f3); }
.panel h2 svg { width: 10px; height: 12px; }
.cats { display: flex; flex-direction: column; margin: 14px 5px 11px; }
.cats button { height: 24px; justify-content: flex-start; gap: 7px; padding-left: 4px; background: linear-gradient(#fcfcfc, #f0f0f0); font: 11px/16px "Liberation Sans", sans-serif; }
.cats button.on { background: #efefef; padding-left: 3px; }
.treebox { flex: 1; margin: 0 5px; border: 1px solid #646464; background: #fff; }
.treebar { display: flex; align-items: center; height: 23px; background: linear-gradient(90deg, #fafafa, #f0f0f0); font: 11px/16px "Open Sans", sans-serif; }
.treebar span { margin-left: 3px; }
.tree { list-style: none; padding-top: 1px; font: 11px/16px "Liberation Sans", sans-serif; }
.tree li { position: relative; display: flex; align-items: center; height: 22px; padding-left: 15px; }
.tree li::before { content: ""; position: absolute; left: 7px; top: 0; bottom: 0; border-left: 1px dotted #999; }
.tree li::after { content: ""; position: absolute; left: 8px; top: 11px; width: 7px; border-top: 1px dotted #999; }
.tree li.last::before { bottom: 11px; }
.tree input { appearance: none; width: 13px; height: 13px; margin: 0; border: 1px solid #222; background: #fff; display: grid; place-items: center; flex: none; }
.tree input:checked::before { content: ""; width: 4px; height: 8px; border: solid #222; border-width: 0 1px 1px 0; transform: translateY(-1px) rotate(40deg); }
.tree input.mixed::before { content: ""; width: 7px; height: 7px; background: #333; }
.tree label, .tree a { margin-left: 2px; }
.tree a { color: #00f; }
.it { font-style: italic; }
.tree .ex > button { position: absolute; z-index: 1; left: 3px; top: 8px; width: 9px; height: 9px; border: 1px solid #9da2cf; background: linear-gradient(#111, #111) 50% 50% / 5px 1px no-repeat, linear-gradient(#111, #111) 50% 50% / 1px 5px no-repeat, #fff; }
.find { margin-left: auto; padding-right: 2px; }
.find svg { width: 14px; height: 14px; }
.sel { position: relative; width: 134px; height: 20px; margin-left: auto; }
.sel select { appearance: none; width: 100%; height: 20px; border: 1px solid #adadad; border-radius: 0; background: #e1e1e1; padding: 0 3px; font: inherit; color: #111; }
.sel svg { position: absolute; right: 4px; top: 7px; width: 10px; height: 6px; pointer-events: none; }
.pointer { position: absolute; z-index: 2; left: -53px; top: 13px; width: 60px; height: 64px; }

.status { display: flex; align-items: center; height: 23px; background: linear-gradient(90deg, #f0f0f0, #fcfcfc); padding-left: 3px; border-top: 1px solid #fafafa; }
.status p { flex: 1; white-space: nowrap; font: 11px/16px "Noto Sans", sans-serif; }
.status button { height: 21px; padding: 0 3px 0 1px; gap: 3px; margin-left: 6px; }
.status .wr { padding-right: 1px; margin-left: 8px; }
.arr { margin-left: 3px; }
.resize { width: 12px; height: 12px; margin: 8px 2px 0 4px; }
```
